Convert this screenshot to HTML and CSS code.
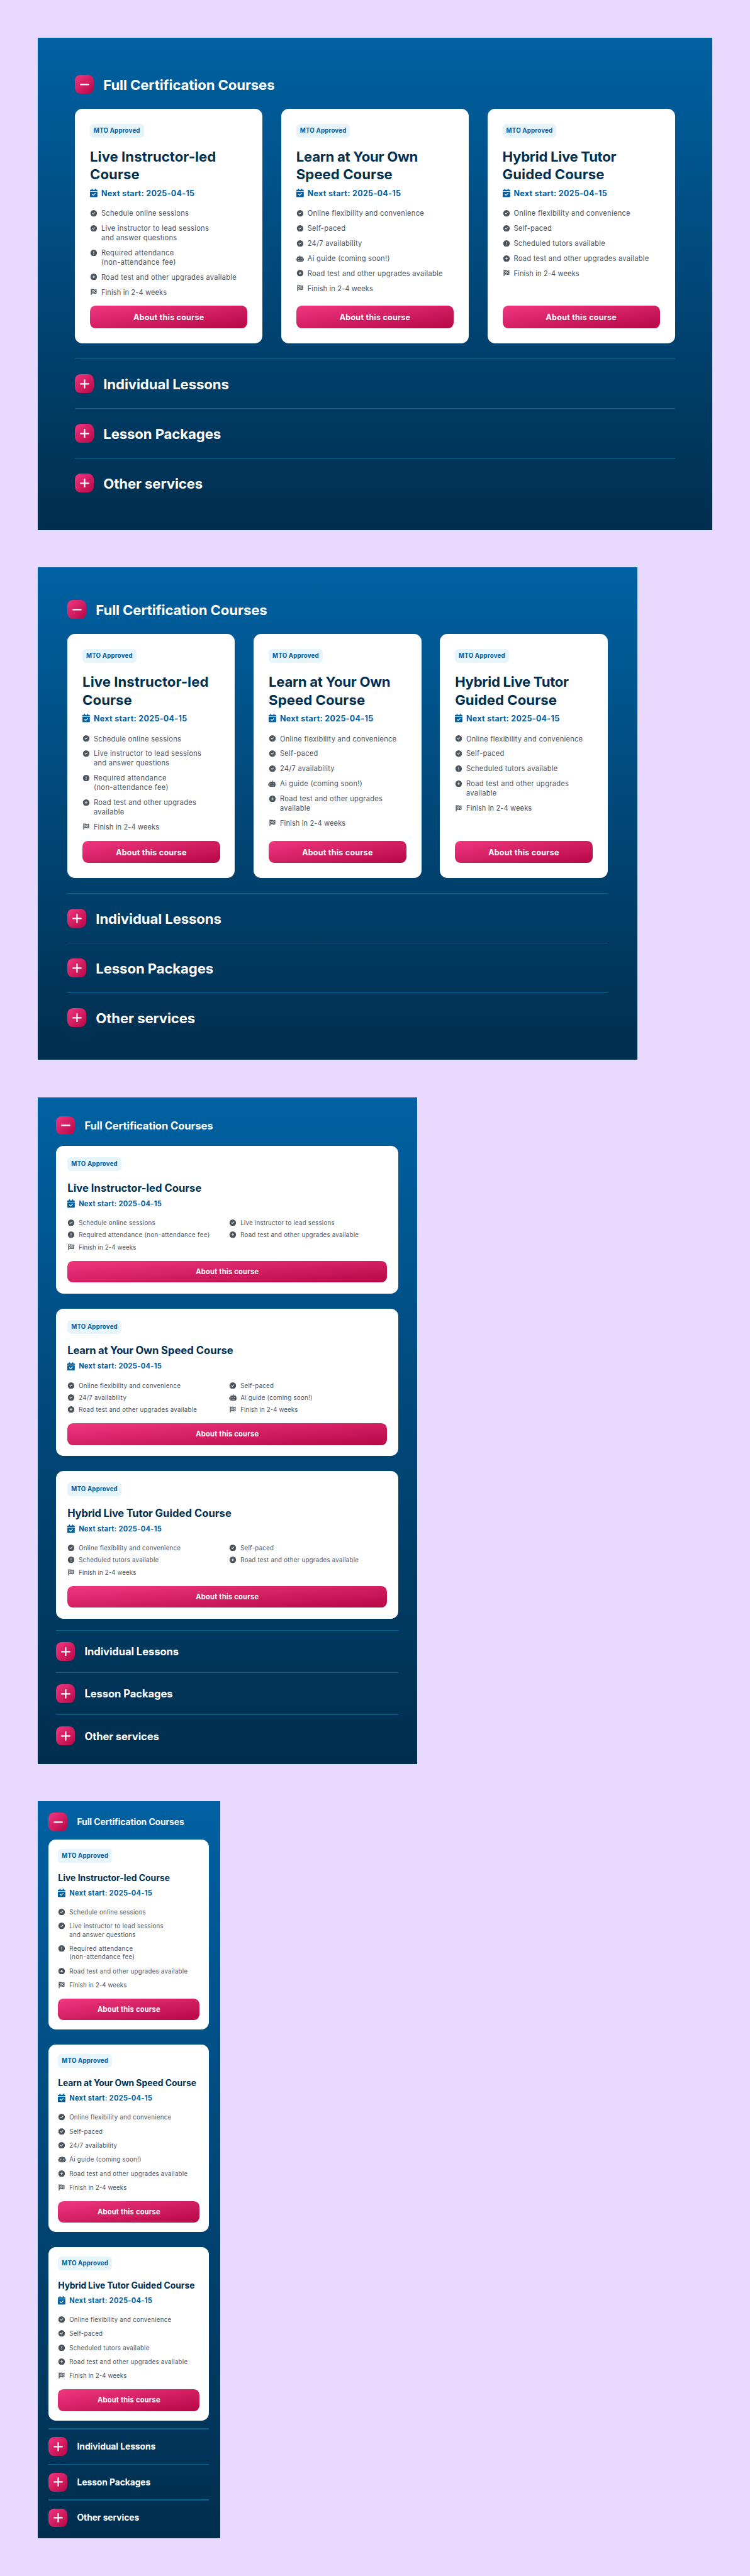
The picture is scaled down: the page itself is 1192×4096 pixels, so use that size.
FILE: index.html
```html
<!DOCTYPE html>
<html lang="en">
<head>
<meta charset="utf-8">
<title>Courses</title>
<link rel="stylesheet" href="styles.css">
</head>
<body>
<svg class="sprite" width="0" height="0" aria-hidden="true">
  <symbol id="calendar" viewBox="0 0 448 512"><path d="M128 0c17.700 0 32 14.300 32 32V64H288V32c0-17.700 14.300-32 32-32s32 14.300 32 32V64h48c26.500 0 48 21.500 48 48v48H0V112C0 85.500 21.500 64 48 64H96V32c0-17.700 14.300-32 32-32zM0 192H448V464c0 26.500-21.500 48-48 48H48c-26.500 0-48-21.500-48-48V192zM329 305c9.400-9.400 9.400-24.600 0-33.900s-24.600-9.400-33.900 0l-95 95-47-47c-9.400-9.400-24.600-9.400-33.900 0s-9.400 24.600 0 33.900l64 64c9.400 9.400 24.600 9.400 33.900 0L329 305z"/></symbol>
  <symbol id="check" viewBox="0 0 512 512"><path d="M256 512A256 256 0 1 0 256 0a256 256 0 1 0 0 512zM369 209L241 337c-9.400 9.400-24.600 9.400-33.900 0l-64-64c-9.400-9.400-9.400-24.600 0-33.900s24.600-9.400 33.900 0l47 47L335 175c9.400-9.400 24.600-9.400 33.900 0s9.400 24.600 0 33.900z"/></symbol>
  <symbol id="alert" viewBox="0 0 512 512"><path d="M256 512A256 256 0 1 0 256 0a256 256 0 1 0 0 512zm0-384c13.300 0 24 10.700 24 24V264c0 13.300-10.700 24-24 24s-24-10.700-24-24V152c0-13.300 10.700-24 24-24zM224 352a32 32 0 1 1 64 0 32 32 0 1 1 -64 0z"/></symbol>
  <symbol id="add" viewBox="0 0 512 512"><path d="M256 512A256 256 0 1 0 256 0a256 256 0 1 0 0 512zM232 344V280H168c-13.300 0-24-10.700-24-24s10.700-24 24-24h64V168c0-13.300 10.700-24 24-24s24 10.700 24 24v64h64c13.300 0 24 10.700 24 24s-10.700 24-24 24H280v64c0 13.300-10.700 24-24 24s-24-10.700-24-24z"/></symbol>
  <symbol id="robot" viewBox="0 0 640 512"><path d="M320 0c17.700 0 32 14.300 32 32V96H472c39.800 0 72 32.200 72 72V440c0 39.800-32.200 72-72 72H168c-39.800 0-72-32.200-72-72V168c0-39.800 32.200-72 72-72H288V32c0-17.700 14.300-32 32-32zM208 384c-8.800 0-16 7.200-16 16s7.200 16 16 16h32c8.800 0 16-7.200 16-16s-7.200-16-16-16H208zm96 0c-8.800 0-16 7.200-16 16s7.200 16 16 16h32c8.800 0 16-7.200 16-16s-7.200-16-16-16H304zm96 0c-8.800 0-16 7.200-16 16s7.200 16 16 16h32c8.800 0 16-7.200 16-16s-7.200-16-16-16H400zM264 256a40 40 0 1 0 -80 0 40 40 0 1 0 80 0zm152 40a40 40 0 1 0 0-80 40 40 0 1 0 0 80zM48 224H64V416H48c-26.500 0-48-21.500-48-48V272c0-26.500 21.500-48 48-48zm544 0c26.500 0 48 21.500 48 48v96c0 26.500-21.500 48-48 48H576V224h16z"/></symbol>
  <symbol id="flag" viewBox="0 0 448 512"><path d="M32 0C49.700 0 64 14.300 64 32V48l69-17.200c38.100-9.500 78.300-5.100 113.500 12.500c46.300 23.200 100.800 23.200 147.100 0l9.600-4.800C423.800 28.100 448 43.100 448 66.100V345.800c0 13.300-8.300 25.300-20.800 30l-34.700 13c-46.200 17.300-97.600 14.600-141.700-7.400c-37.900-19-81.300-23.700-122.500-13.400L64 384v96c0 17.700-14.300 32-32 32s-32-14.300-32-32V32C0 14.300 14.300 0 32 0zM64 187.100l64-13.900v65.500L64 252.600V318l48.800-12.200c5.100-1.300 10.100-2.400 15.200-3.300V238.700l38.900-8.400c8.300-1.800 16.700-2.500 25.100-2.100l0-64c13.600 .4 27.200 2.600 40.400 6.400l23.600 6.900v66.700l-41.700-12.300c-7.300-2.100-14.800-3.400-22.300-3.800v71.400c21.800 1.900 43.300 6.700 64 14.400V244.200l22.700 6.700c13.500 4 27.300 6.400 41.300 7.400V194c-7.800-.8-15.600-2.300-23.200-4.500l-40.800-12v-62c-13-3.800-25.800-8.800-38.200-15c-8.200-4.100-16.900-7-25.800-8.800v72.400c-13-.4-26 .8-38.700 3.600L128 173.200V98L64 114v73.100zM320 335.700c16.800 1.500 33.900-.7 50-6.800l14-5.200V251.900l-7.900 1.800c-18.400 4.300-37.300 5.700-56.100 4.500v77.400zm64-149.400V115.400c-20.900 6.100-42.400 9.100-64 9.100V194c13.900 1.400 28 .5 41.700-2.600l22.300-5.200z"/></symbol>
  <symbol id="plus" viewBox="0 0 20 20"><path class="stroke" d="M10 1.500V18.500M1.500 10H18.500"/></symbol>
  <symbol id="minus" viewBox="0 0 20 20"><path class="stroke" d="M1.500 10H18.500"/></symbol>
</svg>

<section class="panel wide">
  <div class="row"><span class="toggle"><svg><use href="#minus"/></svg></span><h2>Full Certification Courses</h2></div>
  <div class="cards">
    <article class="card">
      <span class="badge">MTO Approved</span>
      <h3>Live Instructor-led Course</h3>
      <p class="next"><svg><use href="#calendar"/></svg>Next start: 2025-04-15</p>
      <ul>
        <li><svg><use href="#check"/></svg><span>Schedule online sessions</span></li>
        <li><svg><use href="#check"/></svg><span>Live instructor to lead sessions <span class="more">and answer questions</span></span></li>
        <li><svg><use href="#alert"/></svg><span class="loose">Required attendance <br>(non-attendance fee)</span></li>
        <li><svg><use href="#add"/></svg><span>Road test and other upgrades available</span></li>
        <li><svg><use href="#flag"/></svg><span class="snug">Finish in 2-4 weeks</span></li>
      </ul>
      <a class="button">About this course</a>
    </article>
    <article class="card">
      <span class="badge">MTO Approved</span>
      <h3><span class="snug">Learn at Your Own</span> Speed Course</h3>
      <p class="next"><svg><use href="#calendar"/></svg>Next start: 2025-04-15</p>
      <ul>
        <li><svg><use href="#check"/></svg><span>Online flexibility and convenience</span></li>
        <li><svg><use href="#check"/></svg><span>Self-paced</span></li>
        <li><svg><use href="#check"/></svg><span>24/7 availability</span></li>
        <li><svg class="bot"><use href="#robot"/></svg><span>Ai guide (coming soon!)</span></li>
        <li><svg><use href="#add"/></svg><span>Road test and other upgrades available</span></li>
        <li><svg><use href="#flag"/></svg><span class="snug">Finish in 2-4 weeks</span></li>
      </ul>
      <a class="button">About this course</a>
    </article>
    <article class="card">
      <span class="badge">MTO Approved</span>
      <h3><span class="snug">Hybrid Live Tutor</span> Guided Course</h3>
      <p class="next"><svg><use href="#calendar"/></svg>Next start: 2025-04-15</p>
      <ul>
        <li><svg><use href="#check"/></svg><span>Online flexibility and convenience</span></li>
        <li><svg><use href="#check"/></svg><span>Self-paced</span></li>
        <li><svg><use href="#alert"/></svg><span>Scheduled tutors available</span></li>
        <li><svg><use href="#add"/></svg><span>Road test and other upgrades available</span></li>
        <li><svg><use href="#flag"/></svg><span class="snug">Finish in 2-4 weeks</span></li>
      </ul>
      <a class="button">About this course</a>
    </article>
  </div>
  <div class="rule"></div>
  <div class="row"><span class="toggle"><svg><use href="#plus"/></svg></span><h2>Individual Lessons</h2></div>
  <div class="rule"></div>
  <div class="row"><span class="toggle"><svg><use href="#plus"/></svg></span><h2>Lesson Packages</h2></div>
  <div class="rule"></div>
  <div class="row"><span class="toggle"><svg><use href="#plus"/></svg></span><h2>Other services</h2></div>
</section>

<section class="panel desktop">
  <div class="row"><span class="toggle"><svg><use href="#minus"/></svg></span><h2>Full Certification Courses</h2></div>
  <div class="cards">
    <article class="card">
      <span class="badge">MTO Approved</span>
      <h3>Live Instructor-led Course</h3>
      <p class="next"><svg><use href="#calendar"/></svg>Next start: 2025-04-15</p>
      <ul>
        <li><svg><use href="#check"/></svg><span>Schedule online sessions</span></li>
        <li><svg><use href="#check"/></svg><span>Live instructor to lead sessions <span class="more">and answer questions</span></span></li>
        <li><svg><use href="#alert"/></svg><span class="loose">Required attendance <br>(non-attendance fee)</span></li>
        <li><svg><use href="#add"/></svg><span>Road test and other upgrades available</span></li>
        <li><svg><use href="#flag"/></svg><span class="snug">Finish in 2-4 weeks</span></li>
      </ul>
      <a class="button">About this course</a>
    </article>
    <article class="card">
      <span class="badge">MTO Approved</span>
      <h3><span class="snug">Learn at Your Own</span> Speed Course</h3>
      <p class="next"><svg><use href="#calendar"/></svg>Next start: 2025-04-15</p>
      <ul>
        <li><svg><use href="#check"/></svg><span>Online flexibility and convenience</span></li>
        <li><svg><use href="#check"/></svg><span>Self-paced</span></li>
        <li><svg><use href="#check"/></svg><span>24/7 availability</span></li>
        <li><svg class="bot"><use href="#robot"/></svg><span>Ai guide (coming soon!)</span></li>
        <li><svg><use href="#add"/></svg><span>Road test and other upgrades available</span></li>
        <li><svg><use href="#flag"/></svg><span class="snug">Finish in 2-4 weeks</span></li>
      </ul>
      <a class="button">About this course</a>
    </article>
    <article class="card">
      <span class="badge">MTO Approved</span>
      <h3><span class="snug">Hybrid Live Tutor</span> Guided Course</h3>
      <p class="next"><svg><use href="#calendar"/></svg>Next start: 2025-04-15</p>
      <ul>
        <li><svg><use href="#check"/></svg><span>Online flexibility and convenience</span></li>
        <li><svg><use href="#check"/></svg><span>Self-paced</span></li>
        <li><svg><use href="#alert"/></svg><span>Scheduled tutors available</span></li>
        <li><svg><use href="#add"/></svg><span>Road test and other upgrades available</span></li>
        <li><svg><use href="#flag"/></svg><span class="snug">Finish in 2-4 weeks</span></li>
      </ul>
      <a class="button">About this course</a>
    </article>
  </div>
  <div class="rule"></div>
  <div class="row"><span class="toggle"><svg><use href="#plus"/></svg></span><h2>Individual Lessons</h2></div>
  <div class="rule"></div>
  <div class="row"><span class="toggle"><svg><use href="#plus"/></svg></span><h2>Lesson Packages</h2></div>
  <div class="rule"></div>
  <div class="row"><span class="toggle"><svg><use href="#plus"/></svg></span><h2>Other services</h2></div>
</section>

<section class="panel compact tablet">
  <div class="row"><span class="toggle"><svg><use href="#minus"/></svg></span><h2>Full Certification Courses</h2></div>
  <div class="cards">
    <article class="card">
      <span class="badge">MTO Approved</span>
      <h3>Live Instructor-led Course</h3>
      <p class="next"><svg><use href="#calendar"/></svg>Next start: 2025-04-15</p>
      <ul>
        <li><svg><use href="#check"/></svg><span>Schedule online sessions</span></li>
        <li><svg><use href="#check"/></svg><span>Live instructor to lead sessions</span></li>
        <li><svg><use href="#alert"/></svg><span class="loose">Required attendance (non-attendance fee)</span></li>
        <li><svg><use href="#add"/></svg><span>Road test and other upgrades available</span></li>
        <li><svg><use href="#flag"/></svg><span class="snug">Finish in 2-4 weeks</span></li>
      </ul>
      <a class="button">About this course</a>
    </article>
    <article class="card">
      <span class="badge">MTO Approved</span>
      <h3><span class="snug">Learn at Your Own</span> Speed Course</h3>
      <p class="next"><svg><use href="#calendar"/></svg>Next start: 2025-04-15</p>
      <ul>
        <li><svg><use href="#check"/></svg><span>Online flexibility and convenience</span></li>
        <li><svg><use href="#check"/></svg><span>Self-paced</span></li>
        <li><svg><use href="#check"/></svg><span>24/7 availability</span></li>
        <li><svg class="bot"><use href="#robot"/></svg><span>Ai guide (coming soon!)</span></li>
        <li><svg><use href="#add"/></svg><span>Road test and other upgrades available</span></li>
        <li><svg><use href="#flag"/></svg><span class="snug">Finish in 2-4 weeks</span></li>
      </ul>
      <a class="button">About this course</a>
    </article>
    <article class="card">
      <span class="badge">MTO Approved</span>
      <h3><span class="snug">Hybrid Live Tutor</span> Guided Course</h3>
      <p class="next"><svg><use href="#calendar"/></svg>Next start: 2025-04-15</p>
      <ul>
        <li><svg><use href="#check"/></svg><span>Online flexibility and convenience</span></li>
        <li><svg><use href="#check"/></svg><span>Self-paced</span></li>
        <li><svg><use href="#alert"/></svg><span>Scheduled tutors available</span></li>
        <li><svg><use href="#add"/></svg><span>Road test and other upgrades available</span></li>
        <li><svg><use href="#flag"/></svg><span class="snug">Finish in 2-4 weeks</span></li>
      </ul>
      <a class="button">About this course</a>
    </article>
  </div>
  <div class="rule"></div>
  <div class="row"><span class="toggle"><svg><use href="#plus"/></svg></span><h2>Individual Lessons</h2></div>
  <div class="rule"></div>
  <div class="row"><span class="toggle"><svg><use href="#plus"/></svg></span><h2>Lesson Packages</h2></div>
  <div class="rule"></div>
  <div class="row"><span class="toggle"><svg><use href="#plus"/></svg></span><h2>Other services</h2></div>
</section>

<section class="panel compact mobile">
  <div class="row"><span class="toggle"><svg><use href="#minus"/></svg></span><h2>Full Certification Courses</h2></div>
  <div class="cards">
    <article class="card">
      <span class="badge">MTO Approved</span>
      <h3>Live Instructor-led Course</h3>
      <p class="next"><svg><use href="#calendar"/></svg>Next start: 2025-04-15</p>
      <ul>
        <li><svg><use href="#check"/></svg><span>Schedule online sessions</span></li>
        <li><svg><use href="#check"/></svg><span>Live instructor to lead sessions <span class="more">and answer questions</span></span></li>
        <li><svg><use href="#alert"/></svg><span class="loose">Required attendance <br>(non-attendance fee)</span></li>
        <li><svg><use href="#add"/></svg><span>Road test and other upgrades available</span></li>
        <li><svg><use href="#flag"/></svg><span class="snug">Finish in 2-4 weeks</span></li>
      </ul>
      <a class="button">About this course</a>
    </article>
    <article class="card">
      <span class="badge">MTO Approved</span>
      <h3><span class="snug">Learn at Your Own</span> Speed Course</h3>
      <p class="next"><svg><use href="#calendar"/></svg>Next start: 2025-04-15</p>
      <ul>
        <li><svg><use href="#check"/></svg><span>Online flexibility and convenience</span></li>
        <li><svg><use href="#check"/></svg><span>Self-paced</span></li>
        <li><svg><use href="#check"/></svg><span>24/7 availability</span></li>
        <li><svg class="bot"><use href="#robot"/></svg><span>Ai guide (coming soon!)</span></li>
        <li><svg><use href="#add"/></svg><span>Road test and other upgrades available</span></li>
        <li><svg><use href="#flag"/></svg><span class="snug">Finish in 2-4 weeks</span></li>
      </ul>
      <a class="button">About this course</a>
    </article>
    <article class="card">
      <span class="badge">MTO Approved</span>
      <h3><span class="snug">Hybrid Live Tutor</span> Guided Course</h3>
      <p class="next"><svg><use href="#calendar"/></svg>Next start: 2025-04-15</p>
      <ul>
        <li><svg><use href="#check"/></svg><span>Online flexibility and convenience</span></li>
        <li><svg><use href="#check"/></svg><span>Self-paced</span></li>
        <li><svg><use href="#alert"/></svg><span>Scheduled tutors available</span></li>
        <li><svg><use href="#add"/></svg><span>Road test and other upgrades available</span></li>
        <li><svg><use href="#flag"/></svg><span class="snug">Finish in 2-4 weeks</span></li>
      </ul>
      <a class="button">About this course</a>
    </article>
  </div>
  <div class="rule"></div>
  <div class="row"><span class="toggle"><svg><use href="#plus"/></svg></span><h2>Individual Lessons</h2></div>
  <div class="rule"></div>
  <div class="row"><span class="toggle"><svg><use href="#plus"/></svg></span><h2>Lesson Packages</h2></div>
  <div class="rule"></div>
  <div class="row"><span class="toggle"><svg><use href="#plus"/></svg></span><h2>Other services</h2></div>
</section>
</body>
</html>
```
FILE: styles.css
```css
/* 1rem is ten design units */
html { font-size: 7.45px; }

*, *::before { box-sizing: border-box; }

body {
  margin: 0;
  padding: 8rem;
  display: flex;
  flex-direction: column;
  align-items: flex-start;
  gap: 8rem;
  background: #e9d9ff;
  font-family: Inter, "Liberation Sans", sans-serif;
}

.sprite { display: none; }
.stroke { fill: none; stroke: #fff; stroke-width: 2.9; stroke-linecap: round; }
h2, h3, p, ul { margin: 0; padding: 0; }

/* Panel */
.panel {
  --gap: 3.2rem;
  --pad: 3.2rem;
  display: flex;
  flex-direction: column;
  gap: var(--gap);
  background: linear-gradient(180deg, #0061a2 0%, #002e4e 100%);
}
.wide { width: 144rem; height: 105.1rem; padding: 8rem; }
.desktop { width: 128rem; height: 105.1rem; padding: 7rem 6.4rem; }
.tablet { --gap: 2.4rem; --pad: 2.4rem; width: 81rem; height: 142.3rem; padding: 4rem; }
.mobile { --gap: 1.7rem; --pad: 2rem; width: 39rem; height: 157.3rem; padding: 2.4rem; }

.row { display: flex; align-items: center; gap: 2rem; height: 4rem; flex: none; }
.toggle {
  display: flex;
  align-items: center;
  justify-content: center;
  width: 4rem;
  height: 4rem;
  border-radius: 1.2rem;
  background: linear-gradient(135deg, #f0377f, #b60746);
}
.toggle svg { width: 2rem; height: 2rem; }
.row h2 {
  padding-top: .2rem;
  color: #fff;
  font-size: 2.976rem;
  font-weight: 700;
  line-height: 1;
  letter-spacing: -.005em;
  white-space: nowrap;
}
.row .toggle + h2 { margin-left: .05rem; }
.tablet .row h2 { font-size: 2.232rem; }
.mobile .row h2 { font-size: 1.86rem; }
.rule { flex: none; height: .2rem; background: #076590; }

/* Cards */
.cards { display: grid; grid-template-columns: repeat(3, minmax(0, 1fr)); gap: 4rem; }
.wide .cards { height: 50.1rem; }
.desktop .cards { height: 52.1rem; }
.compact .cards { grid-template-columns: minmax(0, 1fr); gap: 3.2rem; }
.tablet .cards { grid-template-rows: repeat(3, 31.5rem); }
.mobile .cards { grid-template-rows: 40.6rem 40rem 37rem; }

.card {
  display: flex;
  flex-direction: column;
  align-items: flex-start;
  padding: var(--pad);
  border-radius: 1.6rem;
  background: #fff;
}
.badge {
  flex: none;
  height: 3rem;
  padding: 0 .8rem;
  border-radius: .8rem;
  background: #e6f4fc;
  color: #00609f;
  font-size: 1.302rem;
  font-weight: 700;
  line-height: 3.05rem;
  letter-spacing: .02em;
}
.card h3 {
  margin-top: 2.13rem;
  color: #002f50;
  font-size: 2.976rem;
  font-weight: 700;
  line-height: 3.84rem;
  letter-spacing: .002em;
}
.card h3 .snug { letter-spacing: -.014em; }
.wide h3 .snug, .desktop h3 .snug { display: block; }
.tablet .card h3 { margin-top: 2.2rem; font-size: 2.232rem; line-height: 2.88rem; }
.mobile .card h3 { margin-top: 2.1rem; font-size: 1.86rem; line-height: 2.4rem; white-space: nowrap; }

.next {
  display: flex;
  align-items: center;
  gap: .8rem;
  height: 2.2rem;
  margin-top: .93rem;
  color: #0061a1;
  font-size: 1.674rem;
  font-weight: 700;
  letter-spacing: .026em;
}
.next svg { width: 1.6rem; height: 1.83rem; fill: currentColor; }
.compact .next { font-size: 1.488rem; }
.tablet .next { margin-top: .73rem; }
.mobile .next { margin-top: .84rem; }

.card ul {
  display: flex;
  flex-direction: column;
  gap: 1.2rem;
  margin-top: 2.3rem;
  list-style: none;
  color: #4b535c;
  font-size: 1.488rem;
  line-height: 2rem;
  letter-spacing: .0255em;
}
.card li { display: flex; gap: .8rem; }
.card li svg { flex: none; width: 1.6rem; height: 1.4rem; margin-top: .22rem; fill: currentColor; }
.card li .bot { width: 1.8rem; margin-left: -.1rem; margin-right: -.1rem; }
.card li .loose { letter-spacing: .036em; }
.card li .snug { letter-spacing: .0105em; }
.more { display: block; }

.compact .card ul { font-size: 1.302rem; line-height: 1.8rem; }
.compact .card li svg { margin-top: .13rem; }
.mobile .card ul { margin-top: 2.12rem; }
.tablet .card ul {
  display: grid;
  grid-template-columns: 1fr 1fr;
  gap: .8rem;
  align-self: stretch;
  margin-top: 2.15rem;
}

.button {
  align-self: stretch;
  flex: none;
  height: 4.8rem;
  margin-top: auto;
  border-radius: 1.2rem;
  background: linear-gradient(to bottom right, #f0377f, #b60746);
  color: #fff;
  font-size: 1.674rem;
  font-weight: 700;
  line-height: 5rem;
  letter-spacing: .021em;
  text-align: center;
}
.compact .button { height: 4.6rem; font-size: 1.488rem; line-height: 4.7rem; }
```
